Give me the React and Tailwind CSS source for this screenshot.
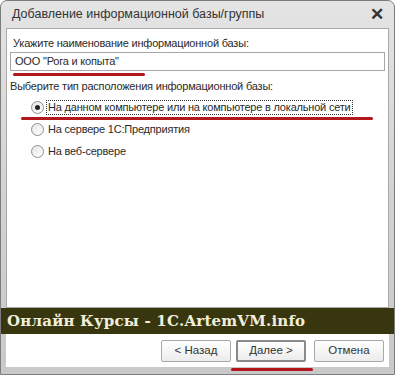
const ui = { fontFamily: '"Liberation Sans", Arial, sans-serif' };

function Radio({ checked, label, focused }) {
  return (
    <div className="flex h-[15px] items-center whitespace-nowrap">
      <span className="ml-[21px] flex h-[13px] w-[13px] items-center justify-center rounded-full border border-[#8f8f8f] bg-gradient-to-br from-[#e6e6e6] to-white">
        {checked && <span className="h-[5px] w-[5px] rounded-full bg-[#222]" />}
      </span>
      <span
        className={
          "ml-[2px] h-[15px] px-px leading-[13px] " +
          (focused ? "border border-dotted border-[#333]" : "border border-transparent")
        }
      >
        {label}
      </span>
    </div>
  );
}

function Button({ children, primary }) {
  return (
    <button
      className={
        "h-[22px] w-[70px] rounded-[2px] bg-gradient-to-b from-white to-[#ececec] text-[11.5px] text-[#333] " +
        (primary ? "border-2 border-[#8a8a8a]" : "border border-[#a9a9a9]")
      }
    >
      {children}
    </button>
  );
}

export default function App() {
  return (
    <div
      className="relative flex h-[375px] w-[395px] flex-col overflow-hidden rounded-t-[7px] border border-[#7d7d7d] bg-gradient-to-b from-[#e4e4e4] via-[#d3d3d3] to-[#c9c9c9] text-[11px] tracking-[-0.2px] text-[#2a2a2a]"
      style={ui}
    >
      {/* title bar */}
      <div className="flex h-[27px] shrink-0 items-center justify-between pl-[11px] pr-[10px] tracking-normal">
        <span className="text-[12.5px] text-[#333]">Добавление информационной базы/группы</span>
        <span className="text-[17px] font-bold leading-none text-[#333]">✕</span>
      </div>

      {/* body */}
      <div className="mx-[5px] flex flex-1 flex-col border border-[#a8a8a8] bg-white px-[3px] pt-[7px]">
        <div className="h-[15px] pl-[3px] leading-[15px]">Укажите наименование информационной базы:</div>
        <div className="mt-px flex h-[19px] items-center border border-[#a7a7a7] pl-[4px]">
          ООО "Рога и копыта"
        </div>
        <div className="ml-[3px] mt-[2px] h-[3px] w-[132px] rounded-full bg-[#b3161b]" />
        <div className="mt-[3px] h-[15px] leading-[15px]">Выберите тип расположения информационной базы:</div>
        <div className="mt-[6px]">
          <Radio checked focused label="На данном компьютере или на компьютере в локальной сети" />
        </div>
        <div className="ml-[11px] mt-[2px] h-[3px] w-[352px] rounded-full bg-[#b3161b]" />
        <div className="mt-[2px]">
          <Radio label="На сервере 1С:Предприятия" />
        </div>
        <div className="mt-[7px]">
          <Radio label="На веб-сервере" />
        </div>
      </div>

      {/* banner */}
      <div
        className="flex h-[26px] shrink-0 items-center bg-[#38360f] pl-[6px] text-[15px] font-bold tracking-[0.2px] text-[#f1efdc]"
        style={{ fontFamily: '"DejaVu Serif", "Liberation Serif", serif' }}
      >
        Онлайн Курсы - 1С.ArtemVM.info
      </div>

      {/* buttons */}
      <div className="mx-[5px] mb-[7px] flex h-[33px] shrink-0 items-start justify-end gap-[5px] bg-white pr-[5px] pt-[6px] tracking-normal">
        <Button>&lt; Назад</Button>
        <div className="mr-[3px]">
          <Button primary>Далее &gt;</Button>
        </div>
        <Button>Отмена</Button>
      </div>

      <div className="absolute left-[230px] top-[367px] h-[3px] w-[82px] rounded-full bg-[#b3161b]" />
    </div>
  );
}
